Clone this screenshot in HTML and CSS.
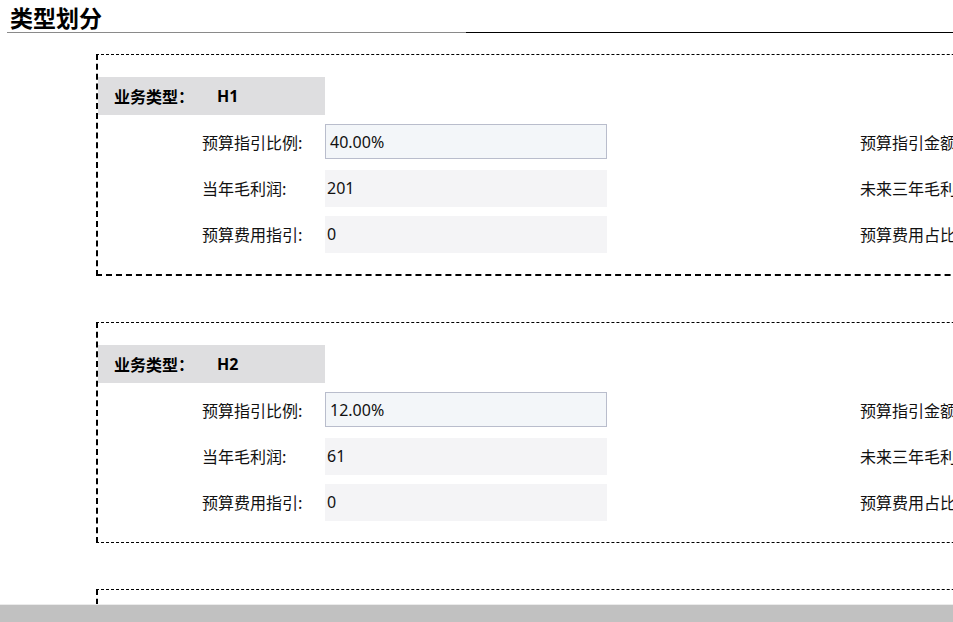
FILE: index.html
```html
<!DOCTYPE html>
<html lang="zh">
<head>
<meta charset="utf-8">
<title>类型划分</title>
<link rel="stylesheet" href="styles.css">
</head>
<body>
<div class="page">
  <div class="title-bar">
    <h1 class="title">类型划分</h1>
    <div class="title-rule"></div>
  </div>

  <section class="group group--first">
    <div class="group-head">
      <span class="head-label">业务类型：</span>
      <span class="head-value">H1</span>
    </div>
    <div class="rows">
      <div class="label">预算指引比例:</div>
      <div class="value value--input">40.00%</div>
      <div class="spacer"></div>
      <div class="label label--right">预算指引金额:</div>

      <div class="label">当年毛利润:</div>
      <div class="value">201</div>
      <div class="spacer"></div>
      <div class="label label--right">未来三年毛利润:</div>

      <div class="label">预算费用指引:</div>
      <div class="value">0</div>
      <div class="spacer"></div>
      <div class="label label--right">预算费用占比:</div>
    </div>
  </section>

  <section class="group">
    <div class="group-head">
      <span class="head-label">业务类型：</span>
      <span class="head-value">H2</span>
    </div>
    <div class="rows">
      <div class="label">预算指引比例:</div>
      <div class="value value--input">12.00%</div>
      <div class="spacer"></div>
      <div class="label label--right">预算指引金额:</div>

      <div class="label">当年毛利润:</div>
      <div class="value">61</div>
      <div class="spacer"></div>
      <div class="label label--right">未来三年毛利润:</div>

      <div class="label">预算费用指引:</div>
      <div class="value">0</div>
      <div class="spacer"></div>
      <div class="label label--right">预算费用占比:</div>
    </div>
  </section>

  <section class="group group--last"></section>
</div>
<div class="hscroll"></div>
</body>
</html>
```

FILE: styles.css
```css
html, body {
  margin: 0;
  padding: 0;
  overflow: hidden;
  background: #fff;
}

body {
  font-family: "Noto Sans", "Noto Sans CJK SC", sans-serif;
  color: #111;
  font-size: 16px;
}

.page {
  width: 1300px;
}

.title-bar {
  display: flex;
  margin-left: 7px;
  height: 33px;
}

.title {
  margin: 0;
  width: 456px;
  padding-left: 3px;
  font-family: "Noto Sans CJK SC", sans-serif;
  font-size: 23px;
  font-weight: 700;
  line-height: 34px;
  height: 32px;
  border-bottom: 1px solid #8a8a8a;
  color: #000;
  overflow: hidden;
}

.title-rule {
  flex: 1;
  border-bottom: 1px solid #000;
  height: 32px;
}

.group {
  margin-left: 96px;
  margin-top: 46px;
  border-top: 1px dashed #000;
  border-left: 2px dashed #000;
  border-bottom: 1px dashed #000;
  padding: 22px 0 17px 0;
}

.group--first {
  margin-top: 21px;
  border-bottom-width: 2px;
}

.group--last {
  height: 200px;
}

.group-head {
  display: flex;
  align-items: center;
  width: 227px;
  height: 38px;
  background: #dedee0;
  box-sizing: border-box;
  padding-left: 16px;
  font-family: "Noto Sans CJK SC", sans-serif;
  font-weight: 700;
  font-size: 16px;
  color: #000;
}

.head-label {
  width: 103px;
}

.head-value {
  font-family: "Noto Sans", sans-serif;
  font-weight: 700;
}

.rows {
  display: grid;
  grid-template-columns: 227px 282px 253px 200px;
  grid-auto-rows: 46px;
  margin-top: 4px;
  align-items: center;
}

.label {
  padding-left: 104px;
  font-family: "Noto Sans CJK SC", sans-serif;
  font-size: 16px;
  line-height: 22px;
  color: #111;
  white-space: nowrap;
}

.label--right {
  padding-left: 0;
}

.value {
  height: 37px;
  box-sizing: border-box;
  background: #f4f4f6;
  padding-left: 2px;
  display: flex;
  align-items: center;
  font-size: 16px;
  color: #111;
}

.value--input {
  height: 35px;
  margin-top: -1px;
  background: #f3f6f9;
  border: 1px solid #b9bdcc;
  padding-left: 4px;
}

.hscroll {
  position: fixed;
  left: 0;
  right: 0;
  bottom: 0;
  height: 17px;
  background: #c1c1c1;
  border-top: 1px solid #ebebeb;
}
```
